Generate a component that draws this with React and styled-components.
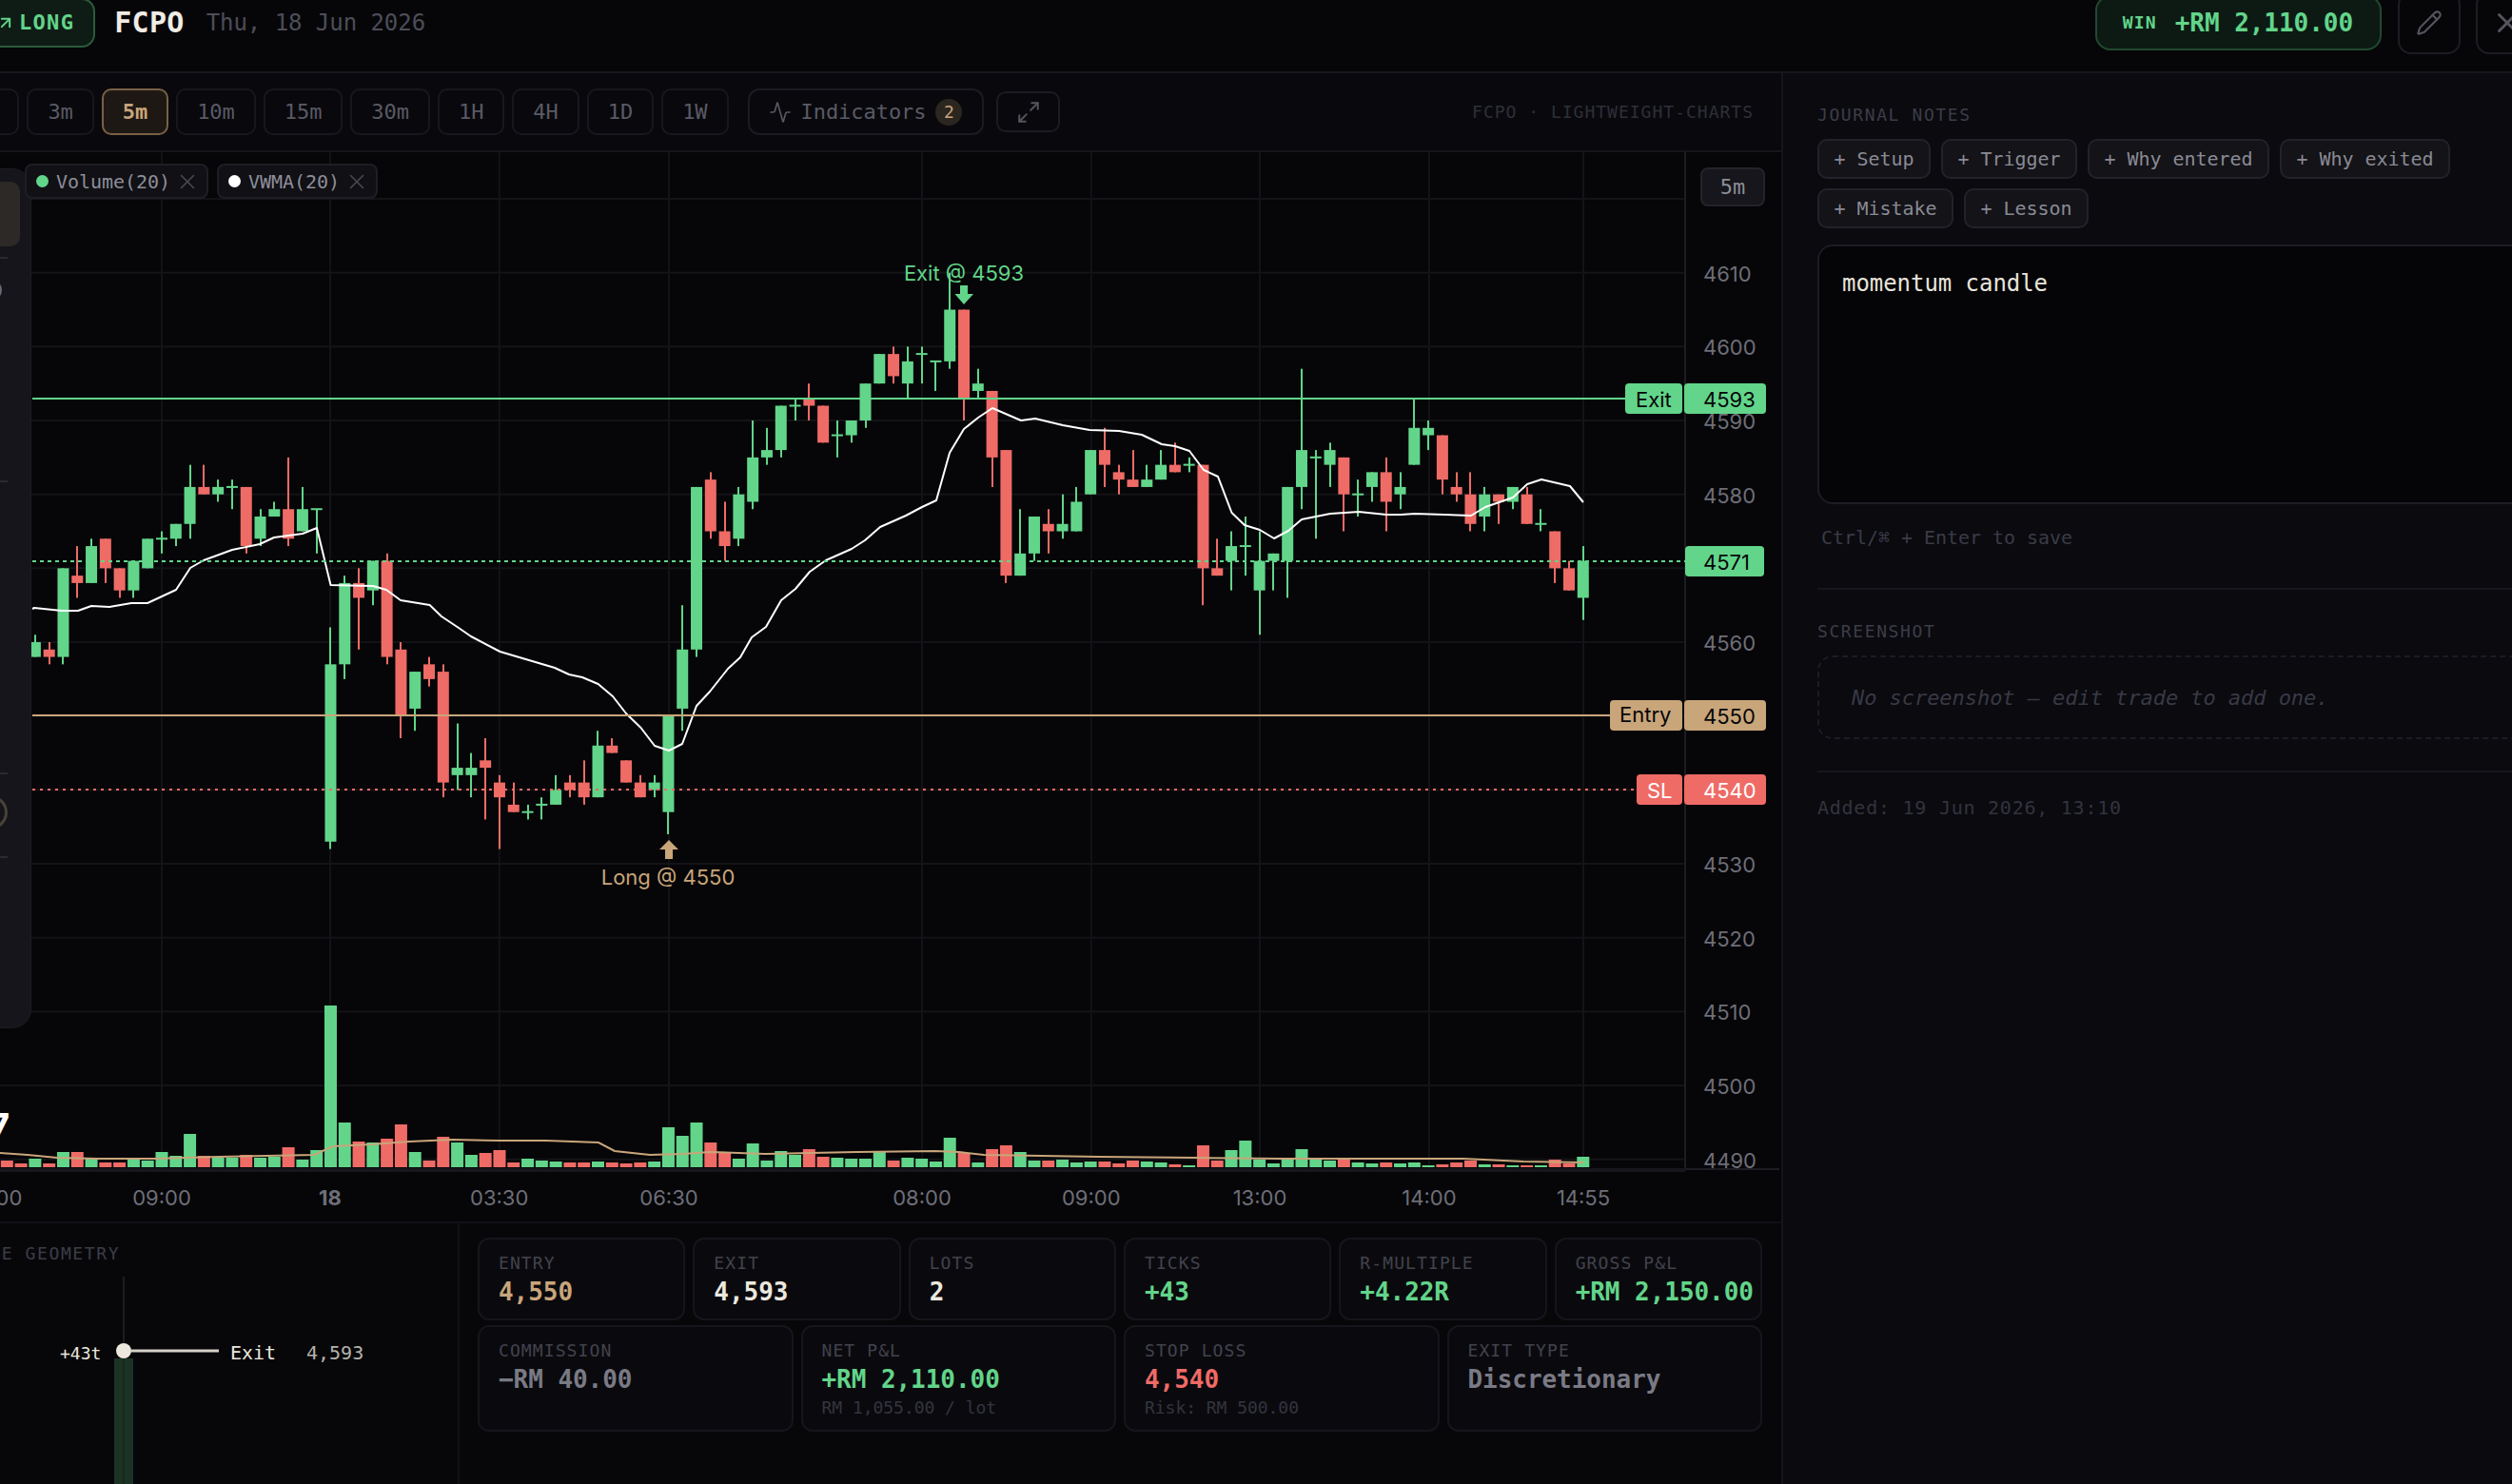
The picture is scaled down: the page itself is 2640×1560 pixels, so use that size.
import React from 'react';
import styled, { createGlobalStyle } from 'styled-components';
import { ArrowUpRight, Pencil, X, Activity, Maximize2, Circle, Type } from 'lucide-react';

const MONO = `"DejaVu Sans Mono", "Liberation Mono", monospace`;
const SANS = `Inter, "Liberation Sans", sans-serif`;
const GREEN = '#62d58a';
const RED = '#ef6b66';
const TAN = '#c9a57a';
const CREAM = '#ece8df';

const Global = createGlobalStyle`
  html, body { margin: 0; padding: 0; background: #050507; }
  * { box-sizing: border-box; }
`;

const Viewport = styled.div`
  width: 2640px; height: 1560px; overflow: hidden; background: #050507; font-family: ${MONO};
`;
const Modal = styled.div`
  width: 2784px; margin: -28px 0 0 -72px; display: flex; flex-direction: column; background: #060609;
`;
const Header = styled.header`
  height: 105px; display: flex; align-items: center; justify-content: space-between;
  padding: 0 44px 0 48px; border-bottom: 2px solid #16161d; background: #060609;
`;
const HeaderGroup = styled.div`
  display: flex; align-items: center; gap: ${p => p.$gap}px;
`;
const DirectionPill = styled.div`
  height: 52px; display: flex; align-items: center; gap: 4px; padding: 0 20px 0 18px; margin-right: -3px;
  border: 2px solid #2a5c3a; border-radius: 14px; background: #0f1c15; color: ${GREEN};
  font-size: 22px; font-weight: 700; letter-spacing: 1.3px;
`;
const Symbol = styled.span`
  font-size: 30px; font-weight: 700; color: #f0ece4; letter-spacing: .3px; margin-left: -1px;
`;
const DateText = styled.span`
  font-size: 24px; color: #4d4d58; letter-spacing: -.05px; margin-left: -1px;
`;
const ResultPill = styled.div`
  height: 58px; display: flex; align-items: center; gap: 19px; padding: 0 28px 0 27px; margin-right: 1px;
  border: 2px solid #22492f; border-radius: 16px; background: #0d1a14; color: ${GREEN};
`;
const ResultTag = styled.span`
  font-size: 18px; font-weight: 700; letter-spacing: 1.2px;
`;
const ResultValue = styled.span`
  font-size: 26px; font-weight: 700; letter-spacing: -.05px;
`;
const IconButton = styled.button`
  width: 66px; height: 66px; padding: 0; display: flex; align-items: center; justify-content: center;
  background: transparent; border: 2px solid #1c1c24; border-radius: 14px; color: #55555f;
`;
const Body = styled.div`
  display: flex; align-items: stretch;
`;
const LeftColumn = styled.div`
  width: 1946px; flex: none; display: flex; flex-direction: column; border-right: 2px solid #14141a;
`;
const Toolbar = styled.div`
  height: 83px; display: flex; align-items: center; padding: 0 29px 0 22px; gap: 8px;
  background: #09090d; border-bottom: 2px solid #15151b;
`;
const TfButton = styled.button`
  height: 49px; padding: 0 20px; border-radius: 10px; font-family: ${MONO}; font-size: 22px; letter-spacing: -.05px;
  border: 2px solid ${p => (p.$active ? '#7a6045' : '#17171d')};
  background: ${p => (p.$active ? '#1d1814' : 'transparent')};
  color: ${p => (p.$active ? TAN : '#5a5a65')};
  font-weight: ${p => (p.$active ? 700 : 400)};
`;
const IndicatorsButton = styled.button`
  height: 49px; margin-left: 12px; padding: 0 21px 0 20px; display: flex; align-items: center; gap: 10px;
  border: 2px solid #1b1b22; border-radius: 12px; background: transparent; color: #5a5a65;
  font-family: ${MONO}; font-size: 22px; letter-spacing: -.05px;
`;
const CountBadge = styled.span`
  width: 28px; height: 28px; border-radius: 50%; background: #2c2620; color: ${TAN};
  display: flex; align-items: center; justify-content: center; font-size: 18px;
`;
const ExpandButton = styled.button`
  width: 67px; height: 43px; margin-left: 5px; padding: 0; display: flex; align-items: center; justify-content: center;
  border: 2px solid #1b1b22; border-radius: 10px; background: transparent; color: #55555f;
`;
const Source = styled.span`
  margin-left: auto; font-size: 18px; letter-spacing: 1px; color: #2f2f39;
`;
const ChartBox = styled.div`
  position: relative; height: 1124px; background: #060608; overflow: hidden;
`;
const ChartSvg = styled.svg`
  display: block;
`;
const Legend = styled.div`
  position: absolute; left: 98px; top: 12px; display: flex; gap: 9px;
`;
const LegendChip = styled.div`
  height: 37px; display: flex; align-items: center; padding: 0 12px 0 10px;
  background: #101015; border: 2px solid #1e1e26; border-radius: 8px;
  color: #8e8e98; font-size: 20px; letter-spacing: -.04px;
`;
const LegendDot = styled.span`
  width: 13px; height: 13px; border-radius: 50%; background: ${p => p.$color}; margin-right: 8px;
`;
const LegendClose = styled.span`
  display: flex; margin: 0 -5px 0 5px; color: #4a4a54;
`;
const FrameTag = styled.div`
  position: absolute; left: 1859px; top: 16px; width: 68px; height: 41px; display: flex;
  align-items: center; justify-content: center; font-size: 22px; color: #8e8e98;
  background: #16161c; border: 2px solid #23232b; border-radius: 8px;
`;
const ToolRail = styled.div`
  position: absolute; left: 19px; top: 17px; width: 86px; height: 904px; display: flex;
  flex-direction: column; align-items: center; padding-top: 13px;
  background: #15151b; border: 1px solid #1c1c23; border-radius: 0 20px 20px 0; color: #6b6b75;
`;
const ActiveTool = styled.div`
  width: 62px; height: 68px; flex: none; border-radius: 10px; background: #2c2926;
`;
const RailSep = styled.div`
  width: 36px; height: 2px; flex: none; background: #2a2a30; margin-top: ${p => p.$mt}px;
`;
const RailIcon = styled.div`
  display: flex; flex: none; margin-top: ${p => p.$mt}px;
`;
const RailRing = styled.div`
  width: 36px; height: 36px; flex: none; margin-top: ${p => p.$mt}px; border-radius: 50%; border: 3px solid #4a4236;
`;
const AxisText = styled.text`
  font-family: ${SANS}; font-size: 22px; fill: ${p => p.$fill || '#6e6e78'};
  font-weight: ${p => (p.$bold ? 700 : 400)};
`;
const WatermarkDigit = styled.text`
  font-family: ${SANS}; font-size: 38px; font-weight: 700; fill: #ffffff;
`;
const BottomRow = styled.div`
  height: 290px; display: flex; background: #07070a; border-top: 2px solid #111116;
`;
const GeometryPane = styled.section`
  width: 555px; flex: none; padding-top: 20px; border-right: 2px solid #111116; overflow: hidden;
`;
const SectionLabel = styled.div`
  font-size: 18px; line-height: 24px; letter-spacing: 1.6px; color: #3d3d48;
  padding-left: ${p => p.$indent || 0}px; margin-top: ${p => p.$mt || 0}px; white-space: nowrap;
`;
const GeometryText = styled.text`
  font-family: ${MONO}; font-size: ${p => p.$size}px; fill: ${p => p.$fill};
`;
const StatsPane = styled.section`
  flex: 1; min-width: 0; padding: 15px 20px 0 19px; display: flex; flex-direction: column; gap: 5px;
`;
const StatGrid = styled.div`
  display: grid; grid-template-columns: repeat(${p => p.$cols}, minmax(0, 1fr)); gap: 8px;
`;
const StatCard = styled.div`
  padding: 13px 20px 11px; background: #0a0a0e; border: 2px solid #15151c; border-radius: 12px;
`;
const StatLabel = styled.div`
  font-size: 18px; line-height: 24px; letter-spacing: 1.1px; color: #42424d; white-space: nowrap;
`;
const StatValue = styled.div`
  font-size: 26px; line-height: 34px; letter-spacing: -.05px; margin-top: 1px; font-weight: 700; color: ${p => p.$color || CREAM}; white-space: nowrap;
`;
const StatSub = styled.div`
  font-size: 18px; line-height: 24px; margin-top: 1px; color: #34343e; letter-spacing: -.04px; white-space: nowrap;
`;
const NotesPane = styled.aside`
  flex: 1; min-width: 0; padding: 32px 36px 0; background: #0a0a0f;
`;
const ChipRow = styled.div`
  display: flex; flex-wrap: wrap; gap: 10px 11px; margin-top: 13px;
`;
const NoteChip = styled.button`
  height: 42px; padding: 0 15.5px; font-family: ${MONO}; font-size: 20px; letter-spacing: -.04px; color: #8a8a94;
  background: #131318; border: 2px solid #22222a; border-radius: 10px; white-space: nowrap;
`;
const NoteBox = styled.div`
  height: 273px; margin-top: 17px; padding: 23px 24px; font-size: 24px; line-height: 32px; font-weight: 500; letter-spacing: -.05px;
  color: #e8e4dc; background: #050507; border: 2px solid #1c1c24; border-radius: 16px;
`;
const Hint = styled.div`
  margin-top: 22px; padding-left: 4px; font-size: 20px; line-height: 26px; letter-spacing: -.04px; color: #3b3b46;
`;
const PaneDivider = styled.div`
  height: 2px; margin-top: ${p => p.$mt}px; background: #16161c;
`;
const EmptyShot = styled.div`
  height: 88px; margin-top: 13px; padding-left: 34px; display: flex; align-items: center;
  font-size: 22px; font-style: italic; letter-spacing: -.05px; color: #393944;
  border: 2px dashed #1c1c24; border-radius: 16px;
`;
const AddedText = styled.div`
  margin-top: 24px; font-size: 20px; line-height: 26px; letter-spacing: .75px; color: #33333d;
`;

const C = [
  ['g',4560,4558,4561,4558],['r',4559,4558,4560,4557],['g',4570,4558,4570,4557],['r',4569,4568,4573,4566],
  ['g',4573,4568,4574,4568],['r',4574,4570,4574,4568],['r',4570,4567,4570,4566],['g',4571,4567,4571,4566],
  ['g',4574,4570,4574,4570],['g',4574,4574,4575,4572],['g',4576,4574,4576,4573],['g',4581,4576,4584,4574],
  ['r',4581,4580,4584,4580],['g',4581,4580,4582,4579],['g',4581,4581,4582,4578],['r',4581,4573,4581,4572],
  ['g',4577,4574,4578,4573],['g',4578,4577,4579,4577],['r',4578,4574,4585,4573],['g',4578,4575,4581,4575],
  ['g',4578,4578,4578,4572],['g',4557,4533,4562,4532],['g',4568,4557,4569,4555],['r',4568,4566,4570,4559],
  ['g',4571,4567,4571,4565],['r',4571,4558,4572,4557],['r',4559,4550,4560,4547],['g',4556,4551,4556,4548],
  ['r',4557,4555,4558,4554],['r',4556,4541,4557,4539],['g',4543,4542,4549,4540],['g',4543,4542,4545,4539],
  ['r',4544,4543,4547,4536],['r',4541,4539,4542,4532],['r',4538,4537,4541,4537],['g',4537,4537,4538,4536],
  ['g',4538,4538,4539,4536],['g',4540,4538,4542,4538],['r',4541,4540,4542,4539],['r',4541,4539,4544,4538],
  ['g',4546,4539,4548,4539],['r',4546,4545,4547,4545],['r',4544,4541,4544,4541],['r',4541,4539,4542,4539],
  ['g',4541,4540,4542,4539],['g',4550,4537,4550,4534],['g',4559,4551,4565,4548],['g',4581,4559,4581,4558],
  ['r',4582,4575,4583,4574],['r',4575,4573,4579,4571],['g',4580,4574,4581,4573],['g',4585,4579,4590,4578],
  ['g',4586,4585,4589,4584],['g',4592,4586,4592,4585],['g',4592,4592,4593,4590],['r',4593,4592,4595,4590],
  ['r',4592,4587,4592,4587],['g',4588,4588,4590,4585],['g',4590,4588,4590,4587],['g',4595,4590,4595,4589],
  ['g',4599,4595,4599,4595],['r',4599,4596,4600,4595],['g',4598,4595,4600,4593],['g',4599,4599,4600,4595],
  ['g',4598,4598,4598,4594],['g',4605,4598,4610,4597],['r',4605,4593,4605,4590],['g',4595,4594,4597,4593],
  ['r',4594,4585,4594,4581],['r',4586,4569,4586,4568],['g',4572,4569,4578,4569],['g',4577,4572,4577,4571],
  ['r',4576,4575,4578,4572],['g',4576,4575,4580,4574],['g',4579,4575,4581,4575],['g',4586,4580,4586,4580],
  ['r',4586,4584,4589,4581],['r',4583,4582,4584,4580],['r',4582,4581,4586,4581],['g',4582,4581,4584,4581],
  ['g',4584,4582,4586,4582],['r',4584,4583,4587,4583],['g',4584,4584,4585,4583],['r',4584,4570,4584,4565],
  ['r',4570,4569,4574,4569],['g',4573,4571,4575,4567],['g',4573,4573,4577,4569],['g',4571,4567,4575,4561],
  ['g',4572,4571,4572,4567],['g',4581,4571,4581,4566],['g',4586,4581,4597,4578],['g',4585,4585,4586,4574],
  ['g',4586,4584,4587,4581],['r',4585,4580,4585,4575],['g',4580,4580,4582,4577],['g',4583,4581,4583,4579],
  ['r',4583,4579,4585,4575],['g',4581,4580,4583,4578],['g',4589,4584,4593,4584],['g',4589,4588,4590,4586],
  ['r',4588,4582,4588,4580],['r',4581,4580,4583,4579],['r',4580,4576,4583,4575],['g',4580,4577,4581,4575],
  ['r',4580,4579,4580,4576],['g',4581,4579,4581,4578],['r',4580,4576,4581,4576],['g',4576,4576,4578,4575],
  ['r',4575,4570,4575,4568],['r',4570,4567,4571,4567],['g',4571,4566,4573,4563],
];

const VOL = (
  'r540 r549 g534 r549 g513 r513 g534 r546 r546 g537 g540 g513 g525 g456 r525 g531 g531 r522 g531 g528 r498 g537 g507 ' +
  'g51 g420 r480 g483 r471 r426 g513 r540 r465 g483 g522 r516 r507 r546 g534 g540 g543 r546 r546 g543 r546 r549 r546 g543 ' +
  'g435 g462 g420 r483 r516 g534 g486 g540 g510 g522 r504 r528 g531 g534 ' +
  'g534 g513 r540 g531 g534 g543 g468 r516 g546 r504 r492 g513 g540 r540 g537 g546 g543 r543 r549 r540 g543 g546 r552 g555 ' +
  'r492 r540 g507 g477 g537 g549 g537 g504 g537 g540 r534 g546 g549 r546 g549 g546 g555 r552 r546 r540 g552 r552 g555 r555 g555 r537 r549 g528'
).split(' ').map(s => [s[0], +s.slice(1)]);

const VWMA = [[34,640],[36,639],[65,642],[82,642],[96,637],[115,638],[138,634],[155,634],[185,620],[200,597],[214,589],[244,578],[273,572],[288,565],[318,561],[333,555],[347.5,615],[392,616],[406,620],[421,631],[451.6,636],[464,648],[482,660],[495,669],[525.5,685],[583,702],[598,709],[612,712],[628.6,719],[644,732],[658,750],[673.5,765],[688,784],[703,789],[717,782],[732,742],[746,727],[765,703],[778,691],[790,670],[805,659],[821,631],[836,619],[851,601],[868,589],[895,577],[909,568],[925,554],[952,542],[969,533],[984,526],[998,476],[1013,451],[1028,439],[1043,429],[1073,442],[1088,440],[1117,447],[1145,452],[1176,453],[1200,457],[1221,467],[1235,469],[1250,474],[1265,494],[1280,501],[1294.5,539],[1308,552],[1324,557],[1339,566],[1354,558],[1368,546],[1398,540],[1428,538],[1457,541],[1472,541],[1487,540],[1546,542],[1561,533],[1590,523],[1605,509],[1620,504],[1650,511],[1664,528]];
const VOLMA = [[0,1212],[29,1214],[60,1217],[103,1218],[161,1218],[230,1216],[330,1214],[350,1205],[390,1203],[430,1200],[476,1198],[525,1199],[574,1199],[629,1201],[646,1210],[683,1214],[718,1213],[746,1211],[804,1213],[900,1211],[983,1210],[1008,1211],[1034,1214],[1155,1216],[1257,1217],[1346,1218],[1538,1218],[1601,1221],[1665,1222]];

const px = i => 170 + 14.79 * i;
const py = p => 752.7 + (4550 - p) * 7.767;
const pts = a => a.map(q => q.join(',')).join(' ');
const colorOf = c => (c === 'g' ? GREEN : RED);

const PRICES = [4610, 4600, 4590, 4580, 4560, 4530, 4520, 4510, 4500, 4490];
const GRID_PRICES = [4620, 4610, 4600, 4590, 4580, 4570, 4560, 4550, 4540, 4530, 4520, 4510, 4500, 4490];
const V_LINES = [-7.5, 170, 347, 524.7, 703, 969, 1146.8, 1324, 1502, 1664];
const TIME_LABELS = [[-7.5, '06:00'], [170, '09:00'], [347, '18', true], [524.7, '03:30'], [703, '06:30'], [969, '08:00'], [1146.8, '09:00'], [1324, '13:00'], [1502, '14:00'], [1664, '14:55']];

function PriceChart() {
  return (
    <ChartSvg width="1944" height="1124" viewBox="-72 160 1944 1124">
      {GRID_PRICES.map(p => <rect key={p} x="-72" y={py(p) - 1} width="1843" height="2" fill="#141418" />)}
      {V_LINES.map(x => <rect key={x} x={x - 1} y="160" width="2" height="1068" fill="#131317" />)}
      <rect x="1770" y="160" width="2" height="1068" fill="#1c1c22" />

      {VOL.map(([c, top], k) => (
        <rect key={k} x={px(k - 11) - 6.5} y={1040 + top / 3} width="13" height={(561 - top) / 3} fill={colorOf(c)} />
      ))}
      <polyline points={pts(VOLMA)} fill="none" stroke={TAN} strokeWidth="2" />
      <rect x="-72" y="1228" width="1843" height="4" fill="#16161c" />
      <rect x="1771" y="1228" width="99" height="2" fill="#1c1c22" />

      {C.map(([c, top, bot, hi, lo], k) => {
        const x = px(k - 9);
        const col = colorOf(c);
        return (
          <g key={k} fill={col}>
            <rect x={Math.round(x) - 1} y={py(hi)} width="2" height={py(lo) - py(hi)} />
            {top === bot
              ? <rect x={x - 6} y={py(top) - 1} width="12" height="2" />
              : <rect x={x - 6} y={py(top)} width="12" height={py(bot) - py(top)} />}
          </g>
        );
      })}
      <polyline points={pts(VWMA)} fill="none" stroke="#ffffff" strokeWidth="2" strokeLinejoin="round" />

      <line x1="34" x2="1708" y1="419" y2="419" stroke={GREEN} strokeWidth="2" />
      <line x1="34" x2="1771" y1="590" y2="590" stroke={GREEN} strokeWidth="2" strokeDasharray="4 4" />
      <line x1="34" x2="1692" y1="752" y2="752" stroke={TAN} strokeWidth="2" />
      <line x1="34" x2="1720" y1="830" y2="830" stroke={RED} strokeWidth="2" strokeDasharray="3 5" />

      <polygon points="1009,300 1017,300 1017,309 1023,309 1013,320 1003.5,309 1009,309" fill={GREEN} />
      <AxisText x="1013" y="287" textAnchor="middle" dominantBaseline="central" $fill={GREEN}>Exit @ 4593</AxisText>
      <polygon points="703,883 713,893 707,893 707,903 699,903 699,893 693,893" fill={TAN} />
      <AxisText x="702" y="922" textAnchor="middle" dominantBaseline="central" $fill={TAN}>Long @ 4550</AxisText>

      {PRICES.map(p => <AxisText key={p} x="1790" y={py(p) + 1} dominantBaseline="central">{p}</AxisText>)}

      <rect x="1708" y="403" width="60" height="32" rx="4" fill={GREEN} />
      <rect x="1770" y="403" width="86" height="32" rx="4" fill={GREEN} />
      <AxisText x="1719" y="420" dominantBaseline="central" $fill="#060608">Exit</AxisText>
      <AxisText x="1790" y="420" dominantBaseline="central" $fill="#060608">4593</AxisText>

      <rect x="1771" y="574" width="83" height="32" rx="4" fill={GREEN} />
      <AxisText x="1790" y="591" dominantBaseline="central" $fill="#060608">4571</AxisText>

      <rect x="1692" y="736" width="76" height="32" rx="4" fill={TAN} />
      <rect x="1770" y="736" width="86" height="32" rx="4" fill={TAN} />
      <AxisText x="1702" y="751" dominantBaseline="central" $fill="#060608">Entry</AxisText>
      <AxisText x="1790" y="753" dominantBaseline="central" $fill="#060608">4550</AxisText>

      <rect x="1720" y="814" width="48" height="32" rx="4" fill={RED} />
      <rect x="1770" y="814" width="86" height="32" rx="4" fill={RED} />
      <AxisText x="1731" y="831" dominantBaseline="central" $fill="#ffffff">SL</AxisText>
      <AxisText x="1790" y="831" dominantBaseline="central" $fill="#ffffff">4540</AxisText>

      <WatermarkDigit x="-12" y="1198">7</WatermarkDigit>

      {TIME_LABELS.map(([x, t, b]) => (
        <AxisText key={x} x={x} y="1259" textAnchor="middle" dominantBaseline="central" $bold={b}>{t}</AxisText>
      ))}
    </ChartSvg>
  );
}

function GeometryDrawing() {
  return (
    <svg width="553" height="260" viewBox="-72 1330 553 260" style={{ display: 'block' }}>
      <rect x="120" y="1428" width="20" height="162" fill="#1b3325" />
      <rect x="129" y="1428" width="2" height="162" fill="#16291d" />
      <rect x="129" y="1342" width="2" height="72" fill="#1c1c22" />
      <rect x="138" y="1418.5" width="92" height="3" fill="#d5d1c8" />
      <circle cx="130" cy="1420" r="8" fill={CREAM} />
      <GeometryText x="63" y="1422" dominantBaseline="central" $size={18} $fill={CREAM}>+43t</GeometryText>
      <GeometryText x="242" y="1422" dominantBaseline="central" $size={20} $fill={CREAM}>Exit</GeometryText>
      <GeometryText x="322" y="1422" dominantBaseline="central" $size={20} $fill="#b5b2ab">4,593</GeometryText>
    </svg>
  );
}

const FRAMES = ['1m', '3m', '5m', '10m', '15m', '30m', '1H', '4H', '1D', '1W'];
const NOTE_CHIPS = ['Setup', 'Trigger', 'Why entered', 'Why exited', 'Mistake', 'Lesson'];

function Stat({ label, value, color, sub }) {
  return (
    <StatCard>
      <StatLabel>{label}</StatLabel>
      <StatValue $color={color}>{value}</StatValue>
      {sub && <StatSub>{sub}</StatSub>}
    </StatCard>
  );
}

export default function App() {
  return (
    <Viewport>
      <Global />
      <Modal>
        <Header>
          <HeaderGroup $gap={24}>
            <DirectionPill><ArrowUpRight size={20} strokeWidth={2.4} />LONG</DirectionPill>
            <Symbol>FCPO</Symbol>
            <DateText>Thu, 18 Jun 2026</DateText>
          </HeaderGroup>
          <HeaderGroup $gap={16}>
            <ResultPill>
              <ResultTag>WIN</ResultTag>
              <ResultValue>+RM 2,110.00</ResultValue>
            </ResultPill>
            <IconButton><Pencil size={28} strokeWidth={1.8} /></IconButton>
            <IconButton><X size={34} strokeWidth={2} /></IconButton>
          </HeaderGroup>
        </Header>
        <Body>
          <LeftColumn>
            <Toolbar>
              {FRAMES.map(f => <TfButton key={f} $active={f === '5m'}>{f}</TfButton>)}
              <IndicatorsButton>
                <Activity size={24} strokeWidth={1.6} />
                Indicators
                <CountBadge>2</CountBadge>
              </IndicatorsButton>
              <ExpandButton><Maximize2 size={26} strokeWidth={1.8} /></ExpandButton>
              <Source>FCPO · LIGHTWEIGHT-CHARTS</Source>
            </Toolbar>
            <ChartBox>
              <PriceChart />
              <ToolRail>
                <ActiveTool />
                <RailSep $mt={11} />
                <RailIcon $mt={20}><Circle size={26} strokeWidth={2} /></RailIcon>
                <RailIcon $mt={57}><Type size={26} strokeWidth={2} /></RailIcon>
                <RailSep $mt={104} />
                <RailIcon $mt={177}><X size={26} strokeWidth={2} /></RailIcon>
                <RailSep $mt={102} />
                <RailRing $mt={22} />
                <RailSep $mt={28} />
              </ToolRail>
              <Legend>
                <LegendChip>
                  <LegendDot $color={GREEN} />Volume(20)
                  <LegendClose><X size={26} strokeWidth={1.4} /></LegendClose>
                </LegendChip>
                <LegendChip>
                  <LegendDot $color="#ffffff" />VWMA(20)
                  <LegendClose><X size={26} strokeWidth={1.4} /></LegendClose>
                </LegendChip>
              </Legend>
              <FrameTag>5m</FrameTag>
            </ChartBox>
            <BottomRow>
              <GeometryPane>
                <SectionLabel $indent={24}>TRADE GEOMETRY</SectionLabel>
                <GeometryDrawing />
              </GeometryPane>
              <StatsPane>
                <StatGrid $cols={6}>
                  <Stat label="ENTRY" value="4,550" color={TAN} />
                  <Stat label="EXIT" value="4,593" />
                  <Stat label="LOTS" value="2" />
                  <Stat label="TICKS" value="+43" color={GREEN} />
                  <Stat label="R-MULTIPLE" value="+4.22R" color={GREEN} />
                  <Stat label="GROSS P&L" value="+RM 2,150.00" color={GREEN} />
                </StatGrid>
                <StatGrid $cols={4}>
                  <Stat label="COMMISSION" value="−RM 40.00" color="#7a7a85" />
                  <Stat label="NET P&L" value="+RM 2,110.00" color={GREEN} sub="RM 1,055.00 / lot" />
                  <Stat label="STOP LOSS" value="4,540" color={RED} sub="Risk: RM 500.00" />
                  <Stat label="EXIT TYPE" value="Discretionary" color="#7a7a85" />
                </StatGrid>
              </StatsPane>
            </BottomRow>
          </LeftColumn>
          <NotesPane>
            <SectionLabel>JOURNAL NOTES</SectionLabel>
            <ChipRow>
              {NOTE_CHIPS.map(c => <NoteChip key={c}>+ {c}</NoteChip>)}
            </ChipRow>
            <NoteBox>momentum candle</NoteBox>
            <Hint>Ctrl/⌘ + Enter to save</Hint>
            <PaneDivider $mt={40} />
            <SectionLabel $mt={32}>SCREENSHOT</SectionLabel>
            <EmptyShot>No screenshot — edit trade to add one.</EmptyShot>
            <PaneDivider $mt={33} />
            <AddedText>Added: 19 Jun 2026, 13:10</AddedText>
          </NotesPane>
        </Body>
      </Modal>
    </Viewport>
  );
}
